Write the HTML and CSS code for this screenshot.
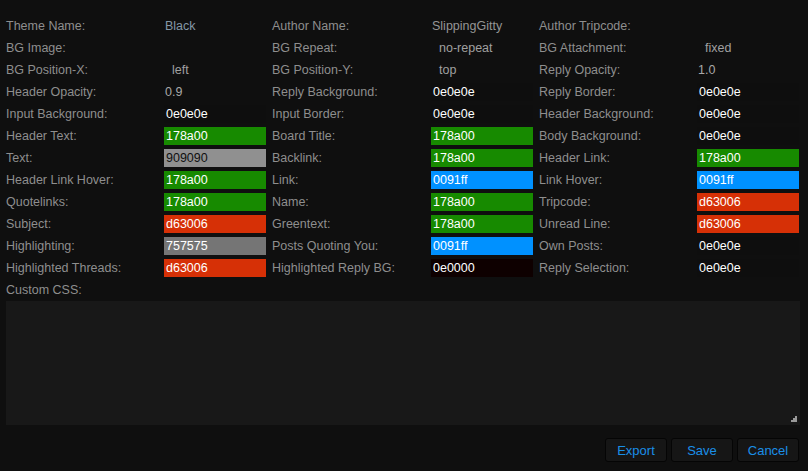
FILE: index.html
```html
<!DOCTYPE html>
<html>
<head>
<meta charset="utf-8">
<link rel="stylesheet" href="styles.css">
</head>
<body>
<div class="editor">
  <div class="grid">
    <div class="lbl">Theme Name:</div><div class="val name">Black</div>
    <div class="lbl">Author Name:</div><div class="val plain">SlippingGitty</div>
    <div class="lbl">Author Tripcode:</div><div class="val"></div>

    <div class="lbl">BG Image:</div><div class="val"></div>
    <div class="lbl">BG Repeat:</div><div class="val sel">no-repeat</div>
    <div class="lbl">BG Attachment:</div><div class="val sel">fixed</div>

    <div class="lbl">BG Position-X:</div><div class="val sel">left</div>
    <div class="lbl">BG Position-Y:</div><div class="val sel">top</div>
    <div class="lbl">Reply Opacity:</div><div class="val num">1.0</div>

    <div class="lbl">Header Opacity:</div><div class="val num">0.9</div>
    <div class="lbl">Reply Background:</div><div class="val sw c0e">0e0e0e</div>
    <div class="lbl">Reply Border:</div><div class="val sw c0e">0e0e0e</div>

    <div class="lbl">Input Background:</div><div class="val sw c0e">0e0e0e</div>
    <div class="lbl">Input Border:</div><div class="val sw c0e">0e0e0e</div>
    <div class="lbl">Header Background:</div><div class="val sw c0e">0e0e0e</div>

    <div class="lbl">Header Text:</div><div class="val sw green">178a00</div>
    <div class="lbl">Board Title:</div><div class="val sw green">178a00</div>
    <div class="lbl">Body Background:</div><div class="val sw c0e">0e0e0e</div>

    <div class="lbl">Text:</div><div class="val sw gray">909090</div>
    <div class="lbl">Backlink:</div><div class="val sw green">178a00</div>
    <div class="lbl">Header Link:</div><div class="val sw green">178a00</div>

    <div class="lbl">Header Link Hover:</div><div class="val sw green">178a00</div>
    <div class="lbl">Link:</div><div class="val sw blue">0091ff</div>
    <div class="lbl">Link Hover:</div><div class="val sw blue">0091ff</div>

    <div class="lbl">Quotelinks:</div><div class="val sw green">178a00</div>
    <div class="lbl">Name:</div><div class="val sw green">178a00</div>
    <div class="lbl">Tripcode:</div><div class="val sw red">d63006</div>

    <div class="lbl">Subject:</div><div class="val sw red">d63006</div>
    <div class="lbl">Greentext:</div><div class="val sw green">178a00</div>
    <div class="lbl">Unread Line:</div><div class="val sw red">d63006</div>

    <div class="lbl">Highlighting:</div><div class="val sw mid">757575</div>
    <div class="lbl">Posts Quoting You:</div><div class="val sw blue">0091ff</div>
    <div class="lbl">Own Posts:</div><div class="val sw c0e">0e0e0e</div>

    <div class="lbl">Highlighted Threads:</div><div class="val sw red">d63006</div>
    <div class="lbl">Highlighted Reply BG:</div><div class="val sw dred">0e0000</div>
    <div class="lbl">Reply Selection:</div><div class="val sw c0e">0e0e0e</div>

    <div class="lbl">Custom CSS:</div>
  </div>
  <div class="css-box">
    <svg class="grip" width="6" height="6" viewBox="0 0 6 6"><rect x="4" y="0" width="2" height="2" fill="#9a9a9a"/><rect x="2" y="2" width="2" height="2" fill="#9a9a9a"/><rect x="4" y="2" width="2" height="2" fill="#9a9a9a"/><rect x="0" y="4" width="2" height="2" fill="#9a9a9a"/><rect x="2" y="4" width="2" height="2" fill="#9a9a9a"/><rect x="4" y="4" width="2" height="2" fill="#9a9a9a"/></svg>
  </div>
  <div class="buttons">
    <button class="btn">Export</button>
    <button class="btn">Save</button>
    <button class="btn">Cancel</button>
  </div>
</div>
</body>
</html>
```

FILE: styles.css
```css
html, body {
  margin: 0;
  padding: 0;
  background: #0f0f0f;
}
body {
  font-family: "Liberation Sans", Arial, sans-serif;
  font-size: 12.5px;
  color: #909090;
}
.editor {
  padding: 15px 8px 0 6px;
}
.grid {
  display: grid;
  grid-template-columns: 158px 102px 165px 102px 164px 102px;
  grid-auto-rows: 22px;
}
.grid .lbl:nth-child(6n+3),
.grid .lbl:nth-child(6n+5) {
  padding-left: 6px;
}
.lbl {
  display: flex;
  align-items: center;
  height: 22px;
  color: #8e8e8e;
  white-space: nowrap;
}
.val {
  height: 18px;
  margin-top: 2px;
  line-height: 18px;
  padding-left: 1px;
  white-space: nowrap;
  color: #ffffff;
}
.val.name { color: #8497a8; }
.val.plain { color: #959595; }
.val.sel { color: #a0a0a0; padding-left: 8px; }
.val.num { color: #a8a8a8; }
.sw { padding-left: 2px; }
.c0e { background: #0e0e0e; }
.green { background: #178a00; }
.blue { background: #0091ff; }
.red { background: #d63006; }
.gray { background: #909090; color: #111111; }
.mid { background: #757575; }
.dred { background: #0e0000; }
.css-box {
  position: relative;
  height: 124px;
  background: #181818;
}
.grip {
  position: absolute;
  right: 3px;
  bottom: 3px;
}
.buttons {
  display: flex;
  justify-content: flex-end;
  gap: 4px;
  padding-top: 13px;
  padding-right: 1px;
}
.btn {
  width: 62px;
  height: 24px;
  background: #161616;
  border: 1px solid #050505;
  border-radius: 3px;
  color: #1a8fe8;
  font-family: "Liberation Sans", Arial, sans-serif;
  font-size: 13px;
  padding: 0;
}
```
